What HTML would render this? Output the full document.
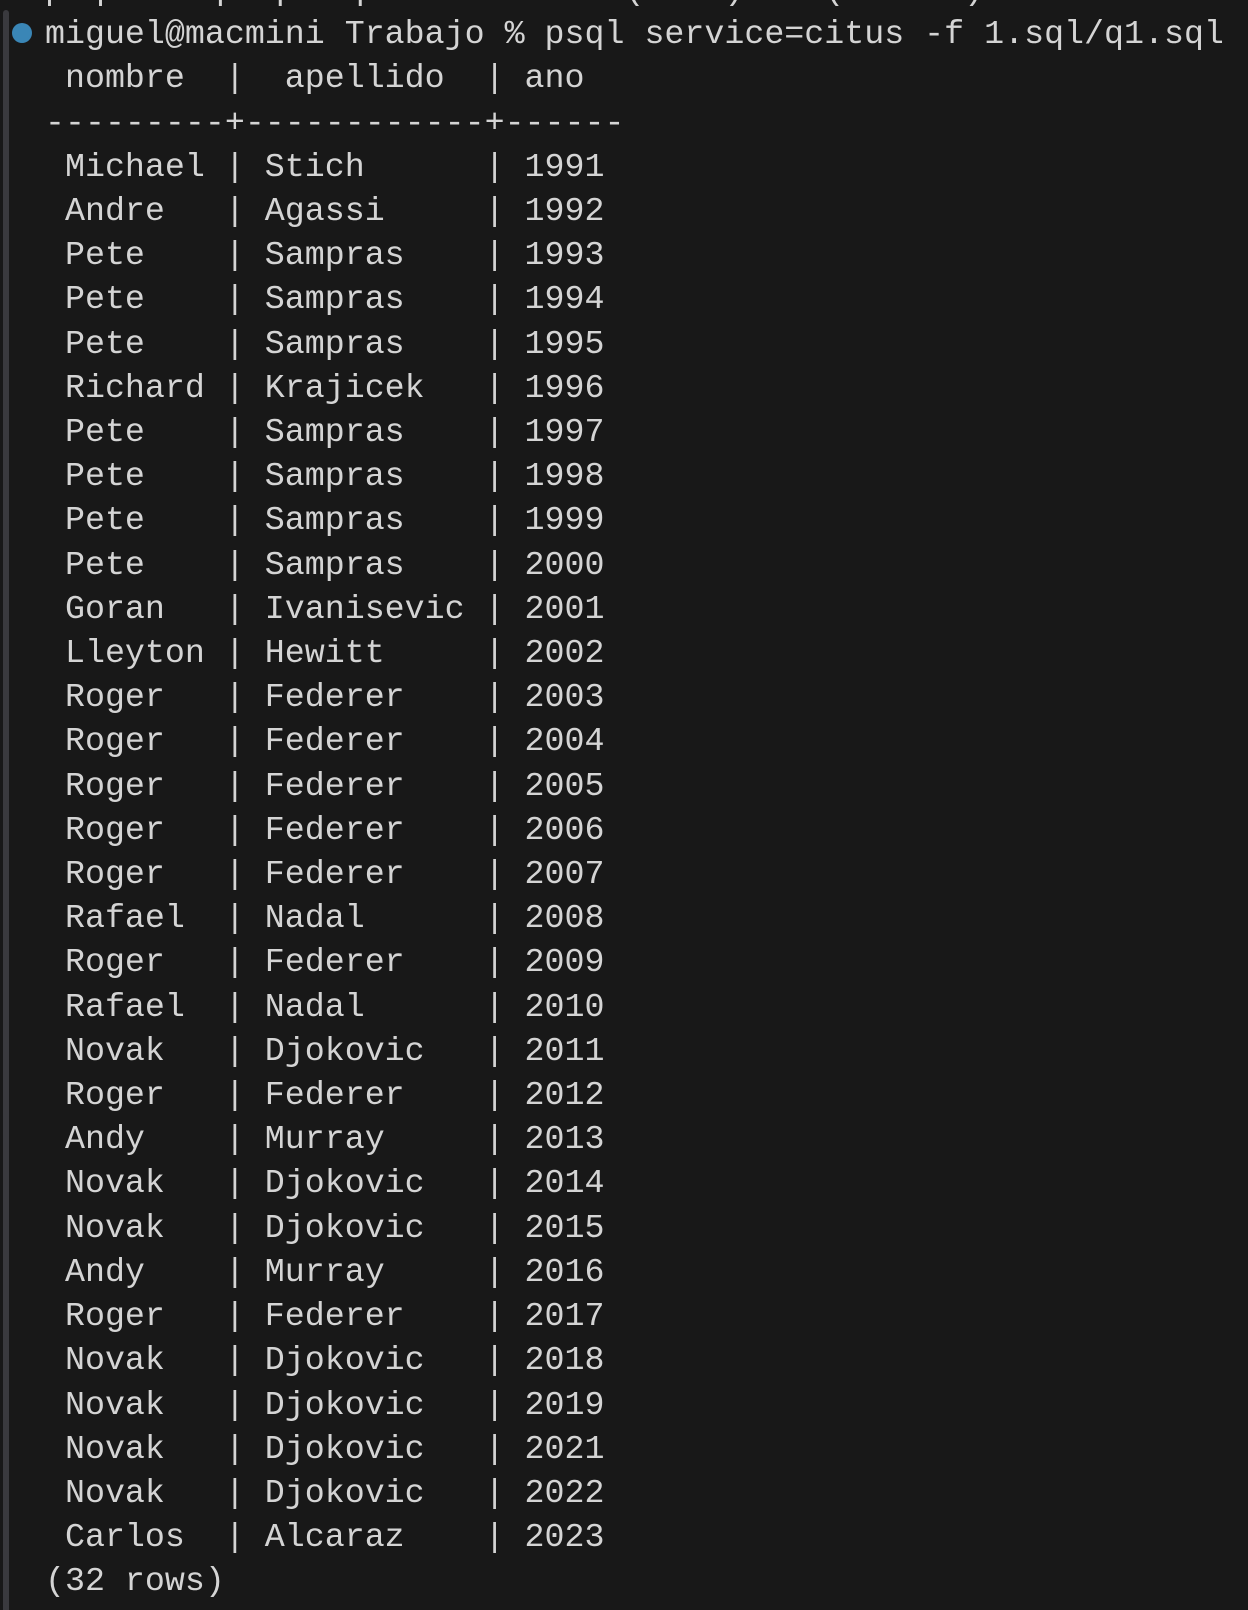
<!DOCTYPE html>
<html><head><meta charset="utf-8"><style>
html,body{margin:0;padding:0;}
body{width:1248px;height:1602px;background:#181818;position:relative;overflow:hidden;}
.bar{position:absolute;left:3px;top:10px;width:6px;height:1600px;background:#3a3a3e;border-radius:3px 3px 0 0;}
.dot{position:absolute;left:12px;top:23px;width:20px;height:20px;border-radius:50%;background:#3a86b6;}
pre{position:absolute;left:45px;top:-32px;margin:0;font-family:"Liberation Mono",monospace;font-size:33.3px;line-height:44.2px;color:#d4d4d4;white-space:pre;}
</style></head><body>
<div class="bar"></div><div class="dot"></div>
<pre>psql:1.sql/q1.sql:1: NOTICE: (nodo) en (worker) ..
miguel@macmini Trabajo % psql service=citus -f 1.sql/q1.sql
 nombre  |  apellido  | ano
---------+------------+------
 Michael | Stich      | 1991
 Andre   | Agassi     | 1992
 Pete    | Sampras    | 1993
 Pete    | Sampras    | 1994
 Pete    | Sampras    | 1995
 Richard | Krajicek   | 1996
 Pete    | Sampras    | 1997
 Pete    | Sampras    | 1998
 Pete    | Sampras    | 1999
 Pete    | Sampras    | 2000
 Goran   | Ivanisevic | 2001
 Lleyton | Hewitt     | 2002
 Roger   | Federer    | 2003
 Roger   | Federer    | 2004
 Roger   | Federer    | 2005
 Roger   | Federer    | 2006
 Roger   | Federer    | 2007
 Rafael  | Nadal      | 2008
 Roger   | Federer    | 2009
 Rafael  | Nadal      | 2010
 Novak   | Djokovic   | 2011
 Roger   | Federer    | 2012
 Andy    | Murray     | 2013
 Novak   | Djokovic   | 2014
 Novak   | Djokovic   | 2015
 Andy    | Murray     | 2016
 Roger   | Federer    | 2017
 Novak   | Djokovic   | 2018
 Novak   | Djokovic   | 2019
 Novak   | Djokovic   | 2021
 Novak   | Djokovic   | 2022
 Carlos  | Alcaraz    | 2023
(32 rows)
</pre>
</body></html>
